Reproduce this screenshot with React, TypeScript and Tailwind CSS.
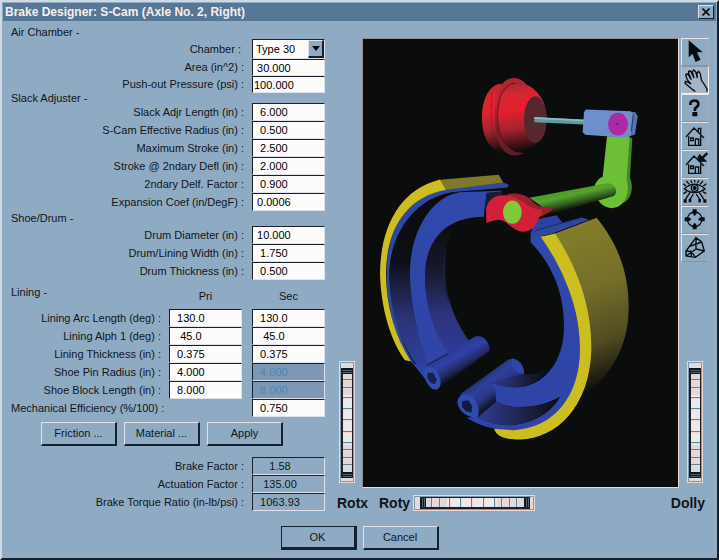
import React from "react";

const inset =
  "border border-t-[#16222e] border-l-[#16222e] border-r-[#dfe2ea] border-b-[#dfe2ea]";
const raised =
  "border border-t-[#e6dfe4] border-l-[#e6dfe4] border-r-2 border-b-2 border-r-[#14202c] border-b-[#14202c]";

function Heading({ children, className }: { children: string; className: string }) {
  return <h2 className={`flex items-center ${className}`}>{children}</h2>;
}

function Box({
  id,
  value,
  label,
  disabled,
  short,
}: {
  id: string;
  value: string;
  label?: string;
  disabled?: boolean;
  short?: boolean;
}) {
  return (
    <input
      id={id}
      aria-label={label}
      defaultValue={value}
      disabled={disabled}
      className={`w-[73px] shrink-0 rounded-none px-px outline-none ${inset} ${
        short ? "h-[17px]" : "h-[18px]"
      } ${disabled ? "bg-[#7c98b5] text-[#4f86b4]" : "bg-[#fefcfb] text-black"}`}
    />
  );
}

function Row({ id, label, value, short }: { id: string; label: string; value: string; short?: boolean }) {
  return (
    <div className="flex items-center">
      <label htmlFor={id} className="flex-1 pr-2 text-right">
        {label} :
      </label>
      <Box id={id} value={value} short={short} />
    </div>
  );
}

function LiningRow({
  id,
  label,
  pri,
  sec,
  disabled,
}: {
  id: string;
  label: string;
  pri?: string;
  sec: string;
  disabled?: boolean;
}) {
  return (
    <div className="flex items-center">
      <label
        htmlFor={pri ? id : `${id}-sec`}
        className={`min-w-0 flex-1 whitespace-nowrap ${pri ? "pr-2 text-right" : "text-left"}`}
      >
        {label} :
      </label>
      <div className="flex w-[156px] shrink-0 justify-between">
        {pri ? <Box id={id} value={pri} /> : <span />}
        <Box id={`${id}-sec`} value={sec} disabled={disabled} label={`${label} Sec`} />
      </div>
    </div>
  );
}

function Result({ id, label, value }: { id: string; label: string; value: string }) {
  return (
    <div className="flex items-center">
      <label htmlFor={id} className="flex-1 pr-2 text-right">
        {label} :
      </label>
      <output
        id={id}
        className={`flex h-[18px] w-[73px] items-center whitespace-pre px-px ${inset}`}
      >
        {value}
      </output>
    </div>
  );
}

function Push({ children, primary }: { children: string; primary?: boolean }) {
  return (
    <button
      className={`h-6 w-[76px] ${
        primary ? "border border-r-[3px] border-b-[3px] border-[#14202c]" : raised
      }`}
    >
      {children}
    </button>
  );
}

const ribs = [18, 26, 36, 47, 58, 70, 81, 88, 96, 103];

function Wheel({ id, label, vertical }: { id: string; label?: string; vertical?: boolean }) {
  return (
    <div className={`relative shrink-0 ${vertical ? "h-[122px] w-4" : "h-4 w-[122px]"}`}>
      <svg
        viewBox={vertical ? "0 0 16 122" : "0 0 122 16"}
        className="block h-full w-full"
        shapeRendering="crispEdges"
        aria-hidden="true"
      >
        <g transform={vertical ? undefined : "translate(0 16) rotate(-90)"}>
          <rect width="16" height="122" fill="#f1d5d0" />
          <rect x="1" y="1" width="14" height="120" fill="#7f98ae" />
          <rect x="2" y="2" width="12" height="118" fill="#dddcdf" />
          <rect x="2" y="7" width="12" height="110" fill="#17222b" />
          <rect x="4" y="7" width="9" height="110" fill="#dcdadd" />
          <rect x="4" y="34" width="9" height="50" fill="#ebe9ea" />
          <rect x="4" y="7" width="9" height="6" fill="#10161c" />
          <rect x="4" y="111" width="9" height="6" fill="#10161c" />
          <path d="M4 9.5h9M4 11.5h9M4 113.5h9M4 115.5h9" stroke="#59636c" />
          {ribs.map((y) => (
            <g key={y}>
              <rect x="4" y={y} width="9" height="1" fill="#5e8698" />
              <rect x="4" y={y + 1} width="9" height="1" fill="#f7d5cd" />
            </g>
          ))}
        </g>
      </svg>
      <input
        id={id}
        type="range"
        aria-label={label}
        className={`absolute inset-0 m-0 h-full w-full cursor-pointer opacity-0 ${
          vertical ? "[writing-mode:vertical-lr]" : ""
        }`}
      />
    </div>
  );
}

const house = "M12 42L36 15L66 45M20 40V67H56V38M40 67V48H50V67M26 45h8v8h-8zM49 26V16H56V32";
const tools: { name: string; art: React.ReactNode; active?: boolean }[] = [
  { name: "Select", art: <path d="M22 8V50L32 41L42 66L53 61L42 38H57Z" fill="#080c10" /> },
  {
    name: "Pan",
    active: true,
    art: (
      <path d="M40 73L32 68L20 58L9 49L10 43L19 46L27 51L16 39L11 24L15 20L20 25L28 38L20 19L20 13L26 12L36 33L31 15L35 9L41 14L46 33L45 18L50 13L55 20L58 39L66 51L75 66V74" />
    ),
  },
  {
    name: "Help",
    art: (
      <g>
        <path d="M25 30Q24 17 37 17T49 28Q49 34 39 40V48" strokeWidth="8" />
        <path d="M33 53h11v9H33z" fill="#080c10" />
      </g>
    ),
  },
  { name: "Home", art: <path d={house} /> },
  {
    name: "Set Home",
    art: (
      <g>
        <path d={house} />
        <path d="M76 6L62 20" strokeWidth="7" />
        <path d="M53 30V12L71 30Z" fill="#080c10" />
      </g>
    ),
  },
  {
    name: "View All",
    art: (
      <g>
        <path d="M7 30Q38 1 69 30Q38 52 7 30ZM24 40L10 62M52 40L66 62M14 38L4 44M62 38L73 44M22 16L13 6M54 16L63 6M30 12L26 4M46 12L51 4M38 10V3M12 21L4 14M64 21L73 14M34 45L22 64M43 45L55 64" />
        <circle cx="38" cy="27" r="10" />
        <circle cx="38" cy="27" r="4" fill="#080c10" />
        <path d="M5 61h9v10H5zM20 60h8v10h-8zM49 60h8v10h-8zM64 61h9v10h-9z" fill="#080c10" stroke="none" />
      </g>
    ),
  },
  {
    name: "Seek",
    art: (
      <g>
        <circle cx="38" cy="37" r="22" />
        <path d="M32 7h12v13L38 27L32 20zM32 67h12V54L38 47L32 54zM8 31v12h13L28 37L21 31zM68 31v12H55L48 37L55 31z" fill="#080c10" stroke="none" />
      </g>
    ),
  },
  {
    name: "Projection",
    art: <path d="M42 8L12 48V63L40 67L67 48L59 21L42 8V42L67 48M42 42L12 63M12 48L28 49L40 67M28 49L28 65M23 34L59 21" />,
  },
];

function Tool({ name, art, active }: { name: string; art: React.ReactNode; active?: boolean }) {
  return (
    <button
      aria-label={name}
      className={`h-7 w-7 border ${
        active
          ? "border-t-[#7f98b0] border-l-[#b9c2cd] border-r-[#f6efee] border-b-[#f6efee] bg-[#a3b5c6]"
          : "border-t-[#efe2e3] border-l-[#efe2e3] border-r-[#a1afbe] border-b-[#8296aa]"
      }`}
    >
      <svg viewBox="0 0 78 78" className="h-full w-full" fill="none" stroke="#080c10" strokeWidth="4">
        {art}
      </svg>
    </button>
  );
}

function Stops({ list }: { list: [string, string][] }) {
  return (
    <>
      {list.map(([offset, color]) => (
        <stop key={offset} offset={offset} stopColor={color} />
      ))}
    </>
  );
}

function BrakeModel() {
  return (
    <svg
      viewBox="363 40 315 447"
      className="block h-full w-full"
      role="img"
      aria-label="S-cam brake assembly"
    >
      <defs>
        <linearGradient id="shell" x1="0" y1="0" x2="0" y2="1">
          <Stops list={[["0", "#0b0c0d"], ["0.38", "#0d0f18"], ["0.68", "#2c3274"], ["1", "#2e43a8"]]} />
        </linearGradient>
        <linearGradient id="inner" x1="0" y1="0" x2="0" y2="1">
          <Stops list={[["0", "#0b0c0d"], ["0.35", "#141827"], ["0.7", "#2c327c"], ["1", "#2f3b9a"]]} />
        </linearGradient>
        <linearGradient id="pinL" gradientUnits="userSpaceOnUse" x1="275" y1="570" x2="315" y2="638">
          <Stops list={[["0", "#2c3a96"], ["0.35", "#2f41a8"], ["0.7", "#242b66"], ["1", "#0c0d12"]]} />
        </linearGradient>
        <linearGradient id="pinR" gradientUnits="userSpaceOnUse" x1="365" y1="650" x2="415" y2="715">
          <Stops list={[["0", "#28306e"], ["0.3", "#2f3f9f"], ["0.7", "#2b3688"], ["1", "#12162c"]]} />
        </linearGradient>
        <linearGradient id="web" x1="0" y1="0" x2="0" y2="1">
          <Stops list={[["0", "#3049aa"], ["1", "#2e44a6"]]} />
        </linearGradient>
        <linearGradient id="trough" x1="0" y1="0" x2="1" y2="0">
          <Stops list={[["0", "#2e3b96"], ["0.45", "#222956"], ["1", "#0b0c0e"]]} />
        </linearGradient>
        <linearGradient id="liningR" x1="0" y1="0" x2="0.15" y2="1">
          <Stops list={[["0", "#878129"], ["0.45", "#746e2a"], ["0.75", "#504c22"], ["1", "#0e0e0b"]]} />
        </linearGradient>
        <linearGradient id="shaft" gradientUnits="userSpaceOnUse" x1="630" y1="90" x2="643" y2="146">
          <Stops list={[["0", "#4d9a2c"], ["0.3", "#56a32e"], ["0.65", "#346421"], ["1", "#0c120a"]]} />
        </linearGradient>
        <linearGradient id="dome" x1="0" y1="0" x2="0.1" y2="1">
          <Stops list={[["0", "#a32731"], ["0.2", "#d82631"], ["0.42", "#e51f30"], ["0.7", "#a0242d"], ["1", "#1a0c0d"]]} />
        </linearGradient>
        <linearGradient id="flange" x1="0" y1="0" x2="0" y2="1">
          <Stops list={[["0", "#a82932"], ["0.35", "#c0222d"], ["0.7", "#76202a"], ["1", "#572024"]]} />
        </linearGradient>
      </defs>
      <rect x="363" y="40" width="315" height="447" fill="#0b0c0c" />

      <g transform="translate(360 160) scale(0.33333)">
        <path d="M80 340C80 220 130 115 258 88L432 70L446 75L443 84L290 97C180 105 88 210 88 350C95 450 115 540 165 615L245 610L220 690L185 645L140 590C100 510 78 430 80 340Z" fill="#2d47a5" />
        <path d="M88 350C88 210 180 105 300 97L372 97C230 100 150 200 150 340C150 440 170 520 210 610L195 645C130 580 88 460 88 350Z" fill="url(#shell)" />
        <path d="M195 350C200 250 230 200 300 178C240 240 225 400 328 545L265 585C225 530 195 450 195 350Z" fill="url(#inner)" />
        <path d="M249 365C248 325 252 290 258 265C252 330 257 400 270 430C258 410 250 390 249 365Z" fill="#1b2140" />
        <path d="M425 94L300 98C215 110 150 215 150 340C150 445 180 550 205 614L267 583C230 535 195 450 195 350C195 240 260 172 372 172L374 145L380 104L425 103Z" fill="url(#web)" />
        <path d="M380 100L425 96V150H374Z" fill="#171c38" />
        <path d="M240 61L416 46L430 70L258 91Z" fill="#80792a" />
        <path d="M240 60C120 90 62 200 60 340C62 450 95 550 135 602L152 605C105 530 78 440 78 340C80 220 130 115 258 91Z" fill="#cdbd22" />

        <path d="M200 617L345 531C370 525 388 545 389 574L236 688Z" fill="url(#pinL)" />
        <path d="M200 617L265 582" stroke="#121735" strokeWidth="3" />
        <path d="M190 635C200 615 225 620 238 650C248 675 238 692 223 690C208 687 192 660 190 635Z" fill="#2f4dac" />
        <path d="M202 640L220 640L230 660L225 674L212 670L202 656Z" fill="#171f4c" />

        <path d="M388 668L425 635C480 652 530 645 562 634C530 672 490 685 455 685C430 685 405 680 388 668Z" fill="url(#trough)" />
        <path d="M300 704L445 600C470 592 492 615 492 644L388 668C420 690 405 710 408 726L352 772Z" fill="url(#pinR)" />
        <path d="M455 597C475 598 493 615 492 643C470 645 450 625 455 597Z" fill="#2f47a6" />

        <path d="M585 222L710 175C780 260 806 350 806 440C806 560 760 640 655 727C670 640 680 500 645 400C630 320 600 260 575 225Z" fill="url(#liningR)" />
        <path d="M512 215L512 248C590 330 612 420 612 500C612 610 550 685 460 684C430 683 400 675 388 668C412 685 406 710 408 726C450 752 540 748 600 712C570 765 510 797 440 797C400 795 370 785 350 772L320 775C360 800 400 812 460 813C590 808 665 700 662 570C655 430 605 310 542 225Z" fill="url(#web)" />
        <path d="M352 774L408 727C450 752 540 748 600 712C570 765 510 797 440 797C400 795 370 787 352 774Z" fill="url(#trough)" />
        <path d="M542 232L585 222C650 320 696 440 694 570C690 740 590 838 480 840C440 840 412 835 402 808L460 812C590 805 660 700 660 570C660 440 605 320 542 232Z" fill="#ccbd20" />
        <path d="M530 180L590 167L607 190L527 217L512 235L516 205Z" fill="#2d42a0" />
        <path d="M527 213L665 174L687 181L575 223L515 237Z" fill="#2c489f" />
        <path d="M527 213L665 174" stroke="#1c2858" strokeWidth="3" />
        <path d="M292 728C294 705 318 696 337 713C356 732 362 762 350 775C325 775 294 755 292 728Z" fill="#2f4dad" />
        <path d="M306 726L325 722L337 740L334 760L318 755L306 742Z" fill="#131a3e" />
      </g>

      <g transform="translate(460 60) scale(0.33333)">
        <path d="M66 175C66 115 90 75 122 73C145 70 150 280 125 285C85 265 66 230 66 175Z" fill="url(#dome)" />
        <path d="M96 100C90 160 95 225 108 265" stroke="#681a22" strokeWidth="2" fill="none" strokeDasharray="8 3" />
        <path d="M200 76C180 48 145 50 128 72C98 110 96 210 120 258C140 290 165 295 190 281L165 276C130 260 112 220 113 170C113 115 135 72 165 71Z" fill="url(#flange)" />
        <path d="M165 71C205 68 230 92 245 118C265 150 265 215 242 240C215 270 190 281 165 278C130 260 113 220 113 170C113 110 135 72 165 71Z" fill="url(#dome)" />
        <path d="M165 71C135 72 113 110 113 170C113 220 130 260 165 278" stroke="#5c161d" strokeWidth="3" fill="none" />
        <ellipse cx="226" cy="180" rx="34" ry="70" fill="#54282d" />
        <path d="M223 173L372 180V195L223 188Z" fill="#5f9ca2" />
        <path d="M223 175L372 183" stroke="#87c0c3" strokeWidth="5" />

        <path d="M505 235H517L510 355C522 385 515 415 492 430L470 430Z" fill="#428727" />
        <path d="M441 230H509L500 358C512 400 495 445 455 446C425 444 405 420 403 385C405 370 415 358 428 352Z" fill="#6dbf38" />
        <path d="M505 156L526 158L533 170L525 225L505 232Z" fill="#5575b0" />
        <path d="M377 150L512 155L519 165L511 227L500 235L376 226L368 218L372 158Z" fill="#6e90ca" />
        <path d="M520 165L514 215" stroke="#263653" strokeWidth="3" />
        <ellipse cx="474" cy="194" rx="30" ry="34" fill="#ae2aa4" />
        <circle cx="472" cy="193" r="3" fill="#5a1556" />
      </g>

      <g transform="translate(360 160) scale(0.33333)">
        <path d="M508 115L742 71C770 70 778 106 756 111L578 164Z" fill="url(#shaft)" />
        <path d="M440 105C460 98 500 102 518 126C540 148 560 142 575 142L574 155L545 170L480 160Z" fill="#991f2b" />
        <path d="M379 190L378 150C385 115 410 105 440 108C488 112 500 150 546 150L545 168C530 175 530 215 490 217C450 215 440 172 405 182Z" fill="#d12038" />
        <ellipse cx="457" cy="158" rx="28" ry="35" fill="#83c83a" />
      </g>
    </svg>
  );
}

export default function App() {
  return (
    <main className="flex min-h-screen flex-col border-2 border-t-[#cfd9e4] border-l-[#cfd9e4] border-r-[#15212e] border-b-[#15212e] bg-[#8fabc3] font-['Liberation_Sans',Arial,sans-serif] text-[11px] leading-[13px] text-[#10151b]">
      <header className="m-px flex h-[18px] items-center justify-between bg-[#567795] pl-[2px] pr-[2px]">
        <h1 className="text-xs font-bold text-[#f8eeee]">Brake Designer: S-Cam (Axle No. 2, Right)</h1>
        <button
          aria-label="Close"
          className="flex h-[14px] w-4 items-center justify-center border border-t-[#e6dfe4] border-l-[#e6dfe4] border-r-[#14202c] border-b-[#14202c] bg-[#8fabc3]"
        >
          <svg viewBox="0 0 8 8" className="h-2 w-2" stroke="#080c10" strokeWidth="1.6">
            <path d="M0.5 0.5L7.5 7.5M7.5 0.5L0.5 7.5" />
          </svg>
        </button>
      </header>

      <div className="flex">
        <form className="w-[323px] shrink-0 pl-[9px]" onSubmit={(e) => e.preventDefault()}>
          <Heading className="h-[17px] pt-[3px]">Air Chamber -</Heading>
          <div className="flex items-center">
            <label htmlFor="chamber" className="flex-1 pr-[11px] text-right">
              Chamber :
            </label>
            <div className="relative">
              <select
                id="chamber"
                className={`block h-5 w-[73px] appearance-none rounded-none bg-[#fefcfb] pl-[3px] text-black ${inset}`}
              >
                <option>Type 30</option>
              </select>
              <span
                className={`pointer-events-none absolute inset-y-px right-px flex w-4 items-center justify-center bg-[#8fabc3] ${raised}`}
              >
                <svg viewBox="0 0 8 5" className="h-[5px] w-2">
                  <path d="M0 0H8L4 5Z" fill="#080c10" />
                </svg>
              </span>
            </div>
          </div>
          <Row id="area" label="Area (in^2)" value=" 30.000" short />
          <Row id="pressure" label="Push-out Pressure (psi)" value="100.000" short />

          <Heading className="h-[10px]">Slack Adjuster -</Heading>
          <Row id="slack" label="Slack Adjr Length (in)" value="  6.000" />
          <Row id="scam" label="S-Cam Effective Radius (in)" value="  0.500" />
          <Row id="stroke" label="Maximum Stroke (in)" value="  2.500" />
          <Row id="stroke2" label="Stroke @ 2ndary Defl (in)" value="  2.000" />
          <Row id="delf" label="2ndary Delf. Factor" value="  0.900" />
          <Row id="coef" label="Expansion Coef (in/DegF)" value=" 0.0006" />

          <Heading className="h-[15px]">Shoe/Drum -</Heading>
          <Row id="diameter" label="Drum Diameter (in)" value=" 10.000" />
          <Row id="width" label="Drum/Lining Width (in)" value="  1.750" />
          <Row id="thickness" label="Drum Thickness (in)" value="  0.500" />

          <div className="flex h-[29px] items-center">
            <h2 className="flex-1 pb-1">Lining -</h2>
            <div className="flex w-[156px] justify-between pt-1 text-center">
              <span className="w-[73px]">Pri</span>
              <span className="w-[73px]">Sec</span>
            </div>
          </div>
          <LiningRow id="arc" label="Lining Arc Length (deg)" pri="  130.0" sec="  130.0" />
          <LiningRow id="alph" label="Lining Alph 1 (deg)" pri="   45.0" sec="   45.0" />
          <LiningRow id="lthick" label="Lining Thickness (in)" pri="  0.375" sec="  0.375" />
          <LiningRow id="pin" label="Shoe Pin Radius (in)" pri="  4.000" sec="  4.000" disabled />
          <LiningRow id="block" label="Shoe Block Length (in)" pri="  8.000" sec="  8.000" disabled />
          <LiningRow id="eff" label="Mechanical Efficiency (%/100)" sec="  0.750" />

          <div className="flex gap-[7px] pt-[5px] pb-[11px] pl-[30px]">
            <Push>Friction ...</Push>
            <Push>Material ...</Push>
            <Push>Apply</Push>
          </div>

          <Result id="bf" label="Brake Factor" value="     1.58" />
          <Result id="af" label="Actuation Factor" value="   135.00" />
          <Result id="btr" label="Brake Torque Ratio (in-lb/psi)" value="  1063.93" />
        </form>

        <section className="ml-3 flex min-w-0 flex-1 flex-col justify-between pt-4 pr-2">
          <div className="flex h-[450px]">
            <div className="flex w-[25px] shrink-0 items-end pb-[5px] pl-[2px]">
              <Wheel id="rotx" vertical />
            </div>
            <div className="min-w-0 flex-1 border border-t-[#96898f] border-l-[#96898f] border-r-[#f3d9d4] border-b-[#f3d9d4] bg-[#0b0c0c]">
              <BrakeModel />
            </div>
            <div className="flex w-[30px] shrink-0 flex-col items-end justify-between pb-[5px]">
              <div className="flex flex-col">
                {tools.map((t) => (
                  <Tool key={t.name} {...t} />
                ))}
              </div>
              <div className="pr-[6px]">
                <Wheel id="dolly" vertical />
              </div>
            </div>
          </div>
          <div className="flex items-center text-sm leading-4 font-bold">
            <label htmlFor="rotx" className="w-[42px]">
              Rotx
            </label>
            <label htmlFor="roty" className="w-[34px]">
              Roty
            </label>
            <Wheel id="roty" />
            <label htmlFor="dolly" className="ml-auto pr-1">
              Dolly
            </label>
          </div>
        </section>
      </div>

      <footer className="flex justify-center gap-[6px] pt-[15px] pb-2">
        <Push primary>OK</Push>
        <Push>Cancel</Push>
      </footer>
    </main>
  );
}
